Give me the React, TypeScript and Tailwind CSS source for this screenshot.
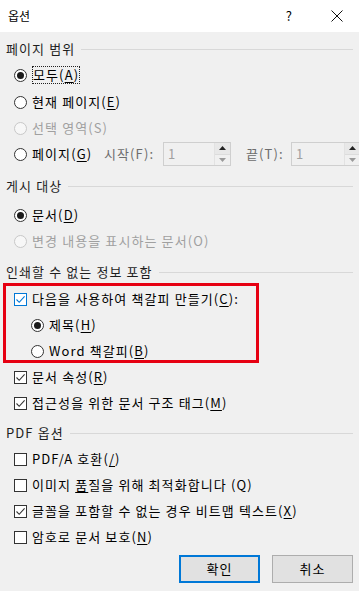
import type { ReactNode } from "react"

const font = { fontFamily: '"Noto Sans CJK KR", "Noto Sans", sans-serif' }

const Mn = ({ children }: { children: ReactNode }) => <span className="underline underline-offset-2">{children}</span>

const SectionHeader = ({ title, className = "" }: { title: string; className?: string }) => (
  <div className={`flex h-[26px] items-center pl-[6px] pr-[6px] ${className}`}>
    <span className="shrink-0 text-[13px] tracking-[1.1px] text-[#1e1e1e]">{title}</span>
    <div className="ml-[6px] h-px flex-1 bg-[#d8d8d8]" />
  </div>
)

const Radio = ({ checked = false, disabled = false }: { checked?: boolean; disabled?: boolean }) => (
  <span
    className={`flex h-[13px] w-[13px] shrink-0 items-center justify-center rounded-full border ${
      disabled ? "border-[#c8c8c8] bg-[#f7f7f7]" : "border-[#333] bg-white"
    }`}
  >
    {checked && <span className="h-[7px] w-[7px] rounded-full bg-[#1b1b1b]" />}
  </span>
)

const Checkbox = ({ checked = false, hot = false }: { checked?: boolean; hot?: boolean }) => (
  <span
    className={`flex h-[13px] w-[13px] shrink-0 items-center justify-center border ${
      hot ? "border-[#0078d7]" : "border-[#333]"
    } bg-white`}
  >
    {checked && (
      <svg width="11" height="11" viewBox="0 0 11 11" fill="none">
        <path d="M1.5 5.5 L4.2 8.3 L9.6 2.4" stroke={hot ? "#0078d7" : "#333"} strokeWidth="1.1" />
      </svg>
    )}
  </span>
)

const Row = ({ indent = 14, children, className = "" }: { indent?: number; children: ReactNode; className?: string }) => (
  <div
    className={`flex h-[26px] items-center gap-[5px] text-[13px] tracking-[1.1px] ${className}`}
    style={{ paddingLeft: indent }}
  >
    {children}
  </div>
)

const SpinBox = ({ width }: { width: string }) => (
  <div className={`flex h-[24px] shrink-0 ${width} border border-[#cfcfcf] bg-[#f0f0f0]`}>
    <div className="flex flex-1 items-center pl-[4px] text-[13px] text-[#a0a0a0]">1</div>
    <div className="flex w-[16px] flex-col border-l border-[#e2e2e2]">
      <div className="flex flex-1 items-center justify-center border-b border-[#dcdcdc] bg-[#e8e8e8]">
        <svg width="7" height="4" viewBox="0 0 7 4">
          <path d="M0 4 L3.5 0 L7 4 Z" fill="#222" />
        </svg>
      </div>
      <div className="flex flex-1 items-center justify-center">
        <svg width="7" height="4" viewBox="0 0 7 4">
          <path d="M0 0 L3.5 4 L7 0 Z" fill="#9a9a9a" />
        </svg>
      </div>
    </div>
  </div>
)

export default function App() {
  return (
    <div className="flex h-[591px] w-[359px] flex-col bg-[#f0f0f0] text-[#000]" style={font}>
      <div className="flex h-[32px] shrink-0 items-center bg-white pl-[8px]">
        <span className="text-[12px]">옵션</span>
        <span className="ml-auto mr-[39px] text-[13px]">?</span>
        <svg width="12" height="12" viewBox="0 0 12 12" className="mr-[16px]">
          <path d="M0.5 0.5 L11.5 11.5 M11.5 0.5 L0.5 11.5" stroke="#111" strokeWidth="1" />
        </svg>
      </div>

      <SectionHeader title="페이지 범위" className="mt-[4px]" />
      <Row>
        <Radio checked />
        <span className="border border-dotted border-[#222] leading-[16px]">
          모두(<Mn>A</Mn>)
        </span>
      </Row>
      <Row className="mt-[1px]">
        <Radio />
        <span>
          현재 페이지(<Mn>E</Mn>)
        </span>
      </Row>
      <Row className="text-[#a0a0a0]">
        <Radio disabled />
        <span>선택 영역(S)</span>
      </Row>
      <Row>
        <Radio />
        <span className="w-[67px] shrink-0 whitespace-nowrap">
          페이지(<Mn>G</Mn>)
        </span>
        <span className="w-[54px] shrink-0 whitespace-nowrap text-[#6d6d6d]">시작(F):</span>
        <SpinBox width="w-[68px]" />
        <span className="ml-[10px] w-[40px] shrink-0 whitespace-nowrap text-[#6d6d6d]">끝(T):</span>
        <SpinBox width="w-[70px]" />
      </Row>

      <SectionHeader title="게시 대상" className="mt-[6px]" />
      <Row className="mt-[3px]">
        <Radio checked />
        <span>
          문서(<Mn>D</Mn>)
        </span>
      </Row>
      <Row className="text-[#a0a0a0]">
        <Radio disabled />
        <span>변경 내용을 표시하는 문서(O)</span>
      </Row>

      <SectionHeader title="인쇄할 수 없는 정보 포함" className="mt-[5px]" />
      <div className="relative mt-[1px]">
        <Row>
          <Checkbox checked hot />
          <span>
            다음을 사용하여 책갈피 만들기(<Mn>C</Mn>):
          </span>
        </Row>
        <Row indent={31} className="h-[25px]">
          <Radio checked />
          <span>
            제목(<Mn>H</Mn>)
          </span>
        </Row>
        <Row indent={31} className="h-[24px]">
          <Radio />
          <span>
            Word 책갈피(<Mn>B</Mn>)
          </span>
        </Row>
        <div className="pointer-events-none absolute left-[3px] top-[-3px] h-[80px] w-[256px] border-[3px] border-[#e60012]" />
      </div>
      <Row className="h-[25px]">
        <Checkbox checked />
        <span>
          문서 속성(<Mn>R</Mn>)
        </span>
      </Row>
      <Row className="h-[24px]">
        <Checkbox checked />
        <span>
          접근성을 위한 문서 구조 태그(<Mn>M</Mn>)
        </span>
      </Row>

      <SectionHeader title="PDF 옵션" className="mt-[4px]" />
      <Row className="h-[25px]">
        <Checkbox />
        <span>
          PDF/A 호환(<Mn>/</Mn>)
        </span>
      </Row>
      <Row className="h-[25px]">
        <Checkbox />
        <span>
          이미지 <Mn>품</Mn>질을 위해 최적화합니다 (Q)
        </span>
      </Row>
      <Row className="h-[25px]">
        <Checkbox checked />
        <span>
          글꼴을 포함할 수 없는 경우 비트맵 텍스트(<Mn>X</Mn>)
        </span>
      </Row>
      <Row className="h-[25px]">
        <Checkbox />
        <span>
          암호로 문서 보호(<Mn>N</Mn>)
        </span>
      </Row>

      <div className="mt-[5px] flex justify-end gap-[12px] pr-[6px]">
        <button className="h-[28px] w-[81px] border-2 border-[#0078d7] bg-[#e1e1e1] text-[13px] tracking-[1.1px]">
          확인
        </button>
        <button className="h-[28px] w-[81px] border border-[#adadad] bg-[#e1e1e1] text-[13px] tracking-[1.1px]">
          취소
        </button>
      </div>
    </div>
  )
}
